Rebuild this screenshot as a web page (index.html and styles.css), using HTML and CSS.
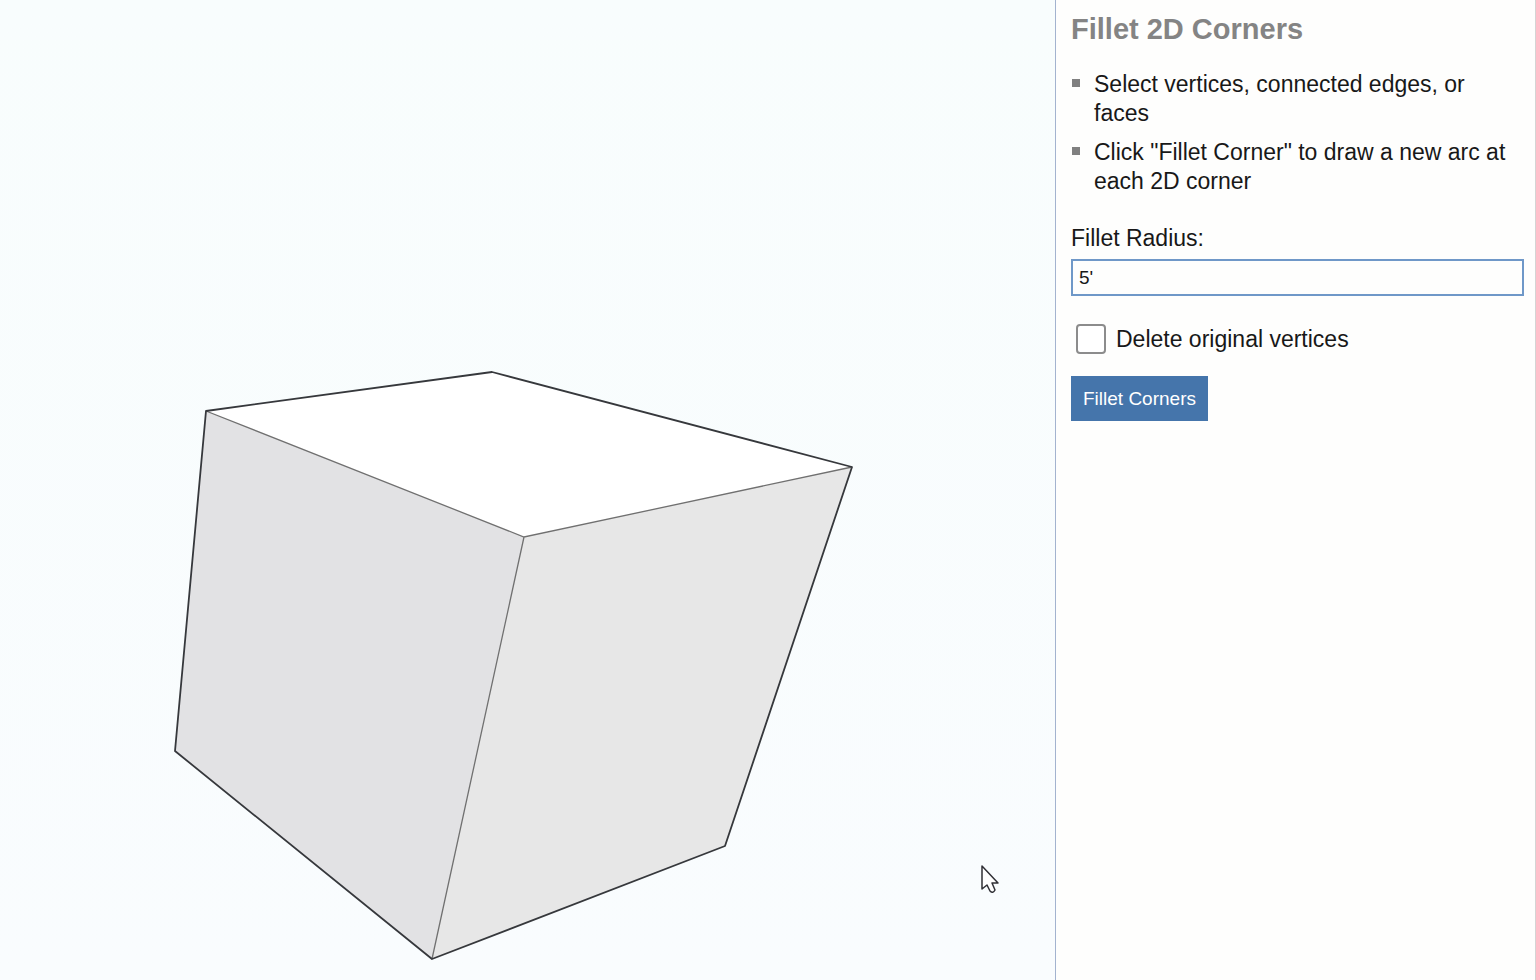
FILE: index.html
```html
<!DOCTYPE html>
<html lang="en">
<head>
<meta charset="utf-8">
<title>Fillet 2D Corners</title>
<link rel="stylesheet" href="styles.css">
</head>
<body>
<div class="app">
  <main class="viewport">
    <svg class="scene" viewBox="0 0 1055 980" role="img" aria-label="3D box">
      <path fill="#ffffff" d="M206 411 492 372 852 467 524 537z"/>
      <path fill="#e2e2e4" d="M206 411 524 537 432 959 175 751z"/>
      <path fill="#e7e7e7" d="M524 537 852 467 725 846 432 959z"/>
      <path class="inner-edge" d="M206 411 524 537 852 467M524 537 432 959"/>
      <path class="outer-edge" d="M206 411 492 372 852 467 725 846 432 959 175 751z"/>
      <path class="cursor" d="M982 866V889L987 885 990 891Q993 894 995 890L992 883H998z"/>
    </svg>
  </main>
  <aside class="panel">
    <h1 class="title">Fillet 2D Corners</h1>
    <ul class="steps">
      <li class="step">Select vertices, connected edges, or faces</li>
      <li class="step">Click "Fillet Corner" to draw a new arc at each 2D corner</li>
    </ul>
    <form class="form">
      <label class="label" for="radius">Fillet Radius:</label>
      <input class="radius" id="radius" type="text" value="5'">
      <div class="option">
        <input class="check" id="delete" type="checkbox">
        <label for="delete">Delete original vertices</label>
      </div>
      <button class="action" type="button">Fillet Corners</button>
    </form>
  </aside>
</div>
</body>
</html>
```
FILE: styles.css
```css
* { box-sizing: border-box; }
body {
  margin: 0;
  font-family: "Liberation Sans", Arial, sans-serif;
  font-size: 23px;
  line-height: 29px;
  color: #181818;
}
.app { display: flex; min-height: 100vh; }
.viewport {
  flex: 1;
  min-width: 0;
  background: linear-gradient(#f8fdfd, #f9fcfe);
}
.scene { display: block; width: 100%; }
.inner-edge { fill: none; stroke: #707070; stroke-width: 1.3; }
.outer-edge { fill: none; stroke: #36383c; stroke-width: 1.8; stroke-linejoin: round; }
.cursor { fill: #fff; stroke: #303036; stroke-width: 1.5; stroke-linejoin: round; }
.panel {
  width: 481px;
  padding: 12px 11px 12px 15px;
  border-left: 1px solid #a3b3cf;
  border-right: 1px solid #d4d4d4;
  background: #fefefd;
}
.title { margin: 0; font-size: 29px; line-height: 34px; color: #848484; }
.steps { margin: 24px 0 0; padding: 0; list-style: none; }
.step { position: relative; margin-bottom: 10px; padding-left: 23px; }
.step::before {
  content: "";
  position: absolute;
  left: 1px;
  top: 9px;
  width: 8px;
  height: 8px;
  background: #808080;
}
.form { display: flex; flex-direction: column; align-items: flex-start; margin-top: 28px; }
.radius {
  width: 100%;
  height: 37px;
  margin: 6px 0 0;
  padding: 0 6px;
  border: 2px solid #6f98c8;
  background: #fefefd;
  font: inherit;
  font-size: 19px;
  color: #181818;
}
.option { display: flex; align-items: center; gap: 10px; margin: 28px 0 22px 5px; }
.check {
  appearance: none;
  width: 30px;
  height: 30px;
  margin: 0;
  border: 2px solid #8c8c8c;
  border-radius: 4px;
  background: #fff;
}
.action {
  height: 45px;
  padding: 0 12px;
  border: 0;
  background: #4575ab;
  font: inherit;
  font-size: 19px;
  color: #fff;
}
```
